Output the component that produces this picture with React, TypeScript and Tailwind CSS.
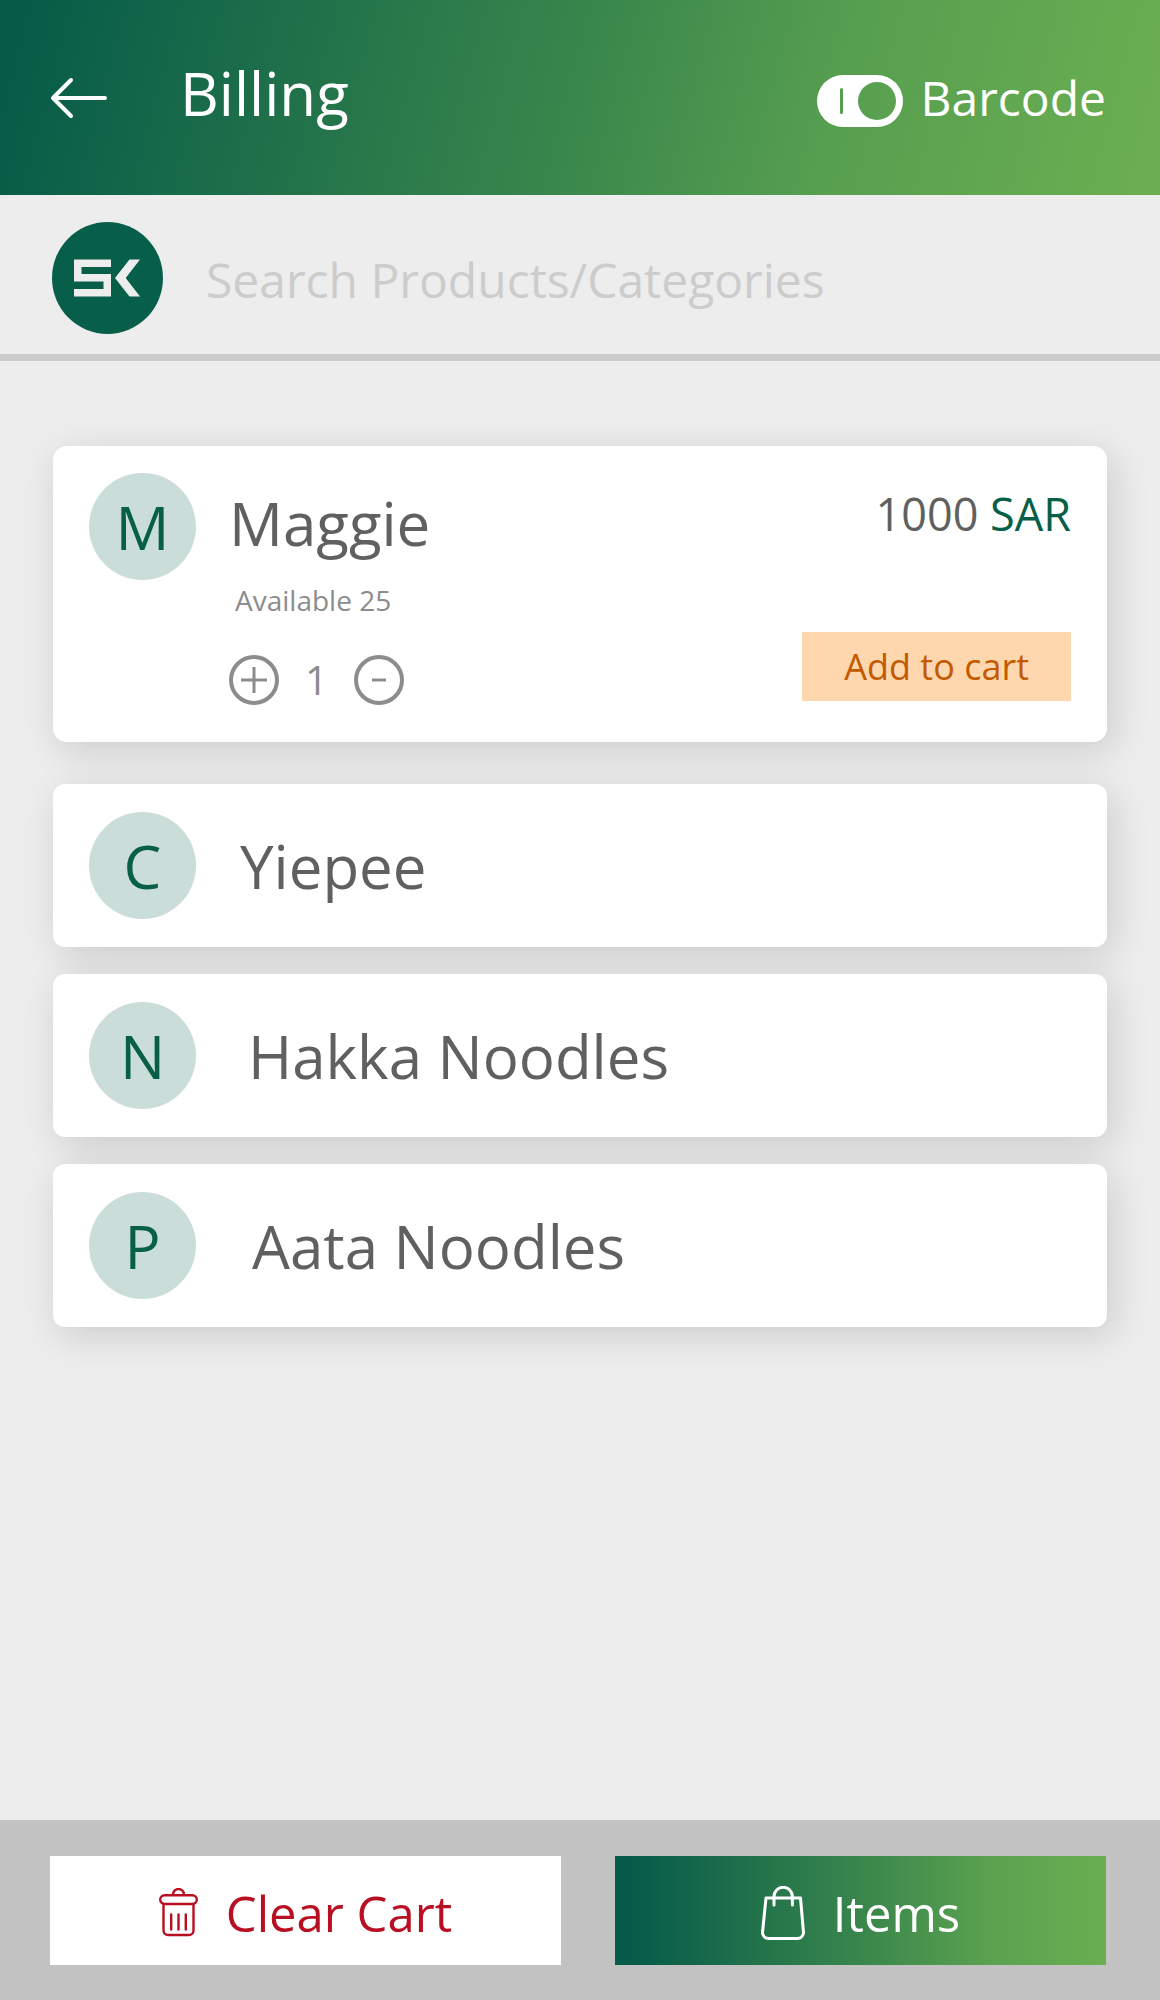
import { useState } from "react";

type Product = { initial: string; name: string; gap: string };

const products: Product[] = [
  { initial: "C", name: "Yiepee", gap: "gap-11" },
  { initial: "N", name: "Hakka Noodles", gap: "gap-13" },
  { initial: "P", name: "Aata Noodles", gap: "gap-14" },
];

const cardShadow = "shadow-[6px_9px_38px_rgba(0,0,0,0.14)]";

function BackArrow() {
  return (
    <svg width="58" height="42" viewBox="0 0 58 42" fill="none" stroke="white" strokeWidth="4" strokeLinecap="round" strokeLinejoin="round" aria-hidden="true">
      <path d="M55 21H3M21 3 3 21l18 18" />
    </svg>
  );
}

function ToggleTrack({ on }: { on: boolean }) {
  return (
    <svg width="86" height="52" viewBox="0 0 86 52" fill="white" fillRule="evenodd" className={on ? "" : "rotate-180"} aria-hidden="true">
      <path d="M26 0H60a26 26 0 0 1 0 52H26a26 26 0 0 1 0-52ZM60 7a19 19 0 1 0 0 38a19 19 0 1 0 0-38ZM24.500 13a1.500 1.500 0 0 0-1.500 1.500v23a1.500 1.500 0 0 0 3 0v-23a1.500 1.500 0 0 0-1.500-1.500Z" />
    </svg>
  );
}

function BrandLogo() {
  return (
    <svg width="111" height="112" viewBox="0 0 111 112" className="shrink-0" role="img" aria-label="SK">
      <ellipse cx="55.500" cy="56" rx="55.500" ry="56" fill="#085f49" />
      <g fill="#ededed">
        <path d="M22 37.500H59V45H29.500V52H59V74.500H22V67H51.500V59.500H22Z" />
        <path d="M77.500 37.500H88L73.700 56 88 74.500H77.500L63 56Z" />
      </g>
    </svg>
  );
}

function TrashIcon() {
  return (
    <svg width="39" height="49" viewBox="0 0 39 49" fill="none" stroke="#b90f22" strokeWidth="2.400" strokeLinecap="round" aria-hidden="true">
      <path d="M14 6.500a5.500 5.500 0 0 1 11 0" />
      <rect x="1.200" y="7.200" width="36.600" height="8.800" rx="4.400" />
      <path d="M4.500 16V42.500a4.500 4.500 0 0 0 4.500 4.500H30a4.500 4.500 0 0 0 4.500-4.500V16M12.200 26.500V41.500M19.500 26.500V41.500M26.800 26.500V41.500" />
    </svg>
  );
}

function BagIcon() {
  return (
    <svg width="44" height="54" viewBox="0 0 44 54" fill="none" stroke="white" strokeWidth="3" strokeLinecap="round" strokeLinejoin="round" aria-hidden="true">
      <path d="M5 12H39.500L42.500 46.500a6 6 0 0 1-6 6H7.500a6 6 0 0 1-6-6Z" />
      <path d="M13 19V10.500a9.200 9.200 0 0 1 18.400 0V19" />
    </svg>
  );
}

function Avatar({ initial }: { initial: string }) {
  return (
    <span className="flex size-[107px] shrink-0 items-center justify-center rounded-full bg-[#cbddd9] text-[60px] leading-[60px] text-[#065f46]">
      {initial}
    </span>
  );
}

function StepButton({ label, path, onClick }: { label: string; path: string; onClick: () => void }) {
  return (
    <button type="button" aria-label={label} onClick={onClick} className="flex size-[50px] items-center justify-center rounded-full border-4 border-[#8c8c8c]">
      <svg width="26" height="26" viewBox="0 0 26 26" fill="none" stroke="#8c8c8c" strokeWidth="3" aria-hidden="true">
        <path d={path} />
      </svg>
    </button>
  );
}

export default function App() {
  const [barcode, setBarcode] = useState(true);
  const [quantity, setQuantity] = useState(1);

  return (
    <div className="flex min-h-screen flex-col bg-[#ededed] font-['Open_Sans',sans-serif]">
      <header className="flex h-[195px] items-center justify-between bg-[linear-gradient(105deg,#075c48_3%,#3a874c_50%,#579f50_72%,#6bae51_98%)] pr-[54px] pl-[50px] text-white">
        <div className="flex items-center gap-[72px]">
          <button type="button" aria-label="Back">
            <BackArrow />
          </button>
          <h1 className="pb-2.5 text-[60px] leading-[60px]">Billing</h1>
        </div>
        <label className="flex cursor-pointer items-center gap-[18px] text-[48px] leading-[48px]">
          <input type="checkbox" className="sr-only" checked={barcode} onChange={(e) => setBarcode(e.target.checked)} />
          <span className="pt-1.5">
            <ToggleTrack on={barcode} />
          </span>
          Barcode
        </label>
      </header>

      <div className="flex items-center gap-[43px] border-b-[7px] border-[#cccccc] pt-[27px] pr-[54px] pb-5 pl-[52px]">
        <BrandLogo />
        <input
          type="search"
          aria-label="Search Products/Categories"
          placeholder="Search Products/Categories"
          className="min-w-0 flex-1 bg-transparent pt-1 text-[48px] leading-[64px] text-[#606060] outline-none placeholder:text-[#cccccc]"
        />
      </div>

      <main className="flex flex-1 flex-col px-[53px] pt-[85px] pb-10">
        <article className={`flex gap-[33px] rounded-[14px] bg-white pt-[27px] pr-9 pb-[37px] pl-9 ${cardShadow}`}>
          <Avatar initial="M" />
          <div className="flex-1 pt-5">
            <h2 className="text-[60px] leading-[60px] text-[#606060]">Maggie</h2>
            <p className="mt-[27px] pl-1.5 text-[28px] leading-[40px] text-[#8c8c8c]">Available 25</p>
            <div className="mt-[35px] flex items-center">
              <StepButton label="Increase quantity" path="M13 0V26M0 13H26" onClick={() => setQuantity(quantity + 1)} />
              <output className="w-[75px] text-center text-[40px] leading-[50px] text-[#8c8c8c]">{quantity}</output>
              <StepButton label="Decrease quantity" path="M6 13H20" onClick={() => setQuantity(Math.max(1, quantity - 1))} />
            </div>
          </div>
          <div className="flex flex-col items-end justify-between pt-[18px] pb-1">
            <p className="text-[45px] leading-[45px] text-[#606060]">
              1000 <span className="text-[#065f46]">SAR</span>
            </p>
            <button type="button" className="bg-[#ffd7ae] px-[42px] text-[36px] leading-[69px] text-[#c25a00]">
              Add to cart
            </button>
          </div>
        </article>

        <ul className="mt-[42px] flex flex-col gap-[27px]">
          {products.map((product) => (
            <li key={product.name} className={`flex items-center rounded-xl bg-white px-9 py-7 ${product.gap} ${cardShadow}`}>
              <Avatar initial={product.initial} />
              <h2 className="text-[60px] leading-[60px] text-[#606060]">{product.name}</h2>
            </li>
          ))}
        </ul>
      </main>

      <footer className="flex gap-[54px] bg-[#c2c2c2] pt-9 pr-[54px] pb-[35px] pl-[50px]">
        <button type="button" className="flex h-[109px] flex-[511] items-center justify-center gap-7 bg-white pt-1 text-[49px] leading-[48px] text-[#b90f22]">
          <TrashIcon />
          Clear Cart
        </button>
        <button type="button" className="flex h-[109px] flex-[491] items-center justify-center gap-7 bg-[linear-gradient(90deg,#075b49_4%,#39864c_50%,#5ba250_77%,#6bae51_100%)] pt-1 text-[49px] leading-[48px] text-white">
          <BagIcon />
          Items
        </button>
      </footer>
    </div>
  );
}
